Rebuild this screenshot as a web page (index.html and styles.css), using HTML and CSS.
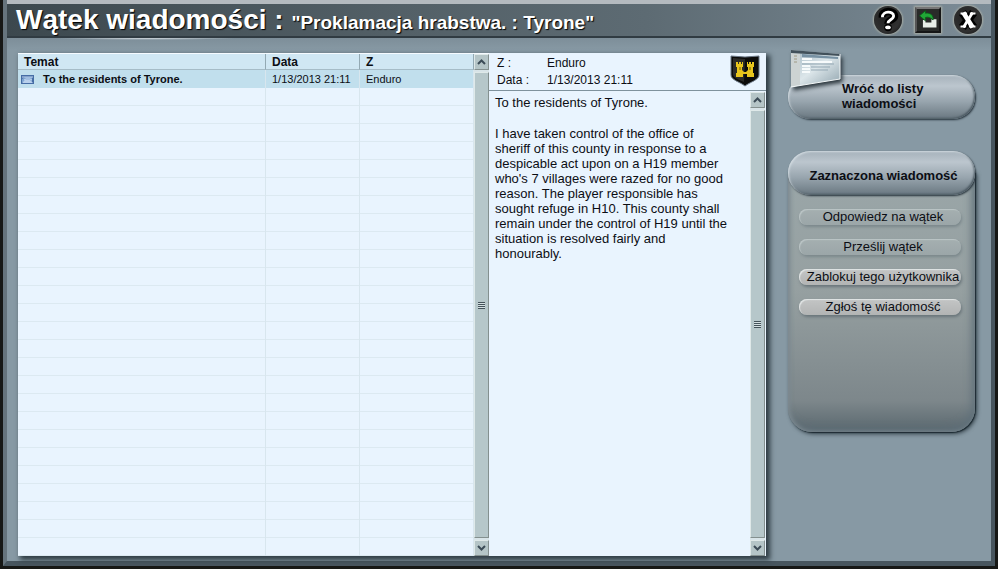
FILE: index.html
```
<!DOCTYPE html>
<html lang="pl">
    <head>
        <meta charset="UTF-8">
        <meta name="viewport" content="width=device-width,initial-scale=1.0">
        <title>Wątek wiadomości</title>
        <link rel="stylesheet" href="styles.css">
    </head>
    <body>
        <main class="window">
            <header class="titlebar">
                <h1>Wątek wiadomości : <span class="thread">"Proklamacja hrabstwa. : Tyrone"</span></h1>
                <div class="tools">
                    <button class="tool" aria-label="Pomoc">
                        <svg viewBox="0 0 30 30">
                            <path d="M9 12C8 4 22 4 22 11C22 15 15 14.500 15 19" fill="none" stroke="#000" stroke-width="8"/>
                            <circle cx="15" cy="23" r="4" fill="#000"/>
                            <path d="M9 12C9 5 21 5 21 10.500C21 15 15 14.500 15 18.500" fill="none" stroke="#fff" stroke-width="3"/>
                            <ellipse cx="15" cy="23" rx="3" ry="2" fill="#fff"/>
                        </svg>
                    </button>
                    <button class="tool square" aria-label="Minimalizuj">
                        <svg viewBox="0 0 26 26">
                            <path d="M7 13H10V16H17V12H23V22H7Z" fill="#e8eee8"/>
                            <path d="M3 8L10 2V5C16 4 20 8 19 13C16 10 13 9 10 10V14Z" fill="#21a637" stroke="#0b5c19" stroke-width="1"/>
                        </svg>
                    </button>
                    <button class="tool" aria-label="Zamknij">
                        <svg viewBox="0 0 30 30">
                            <path d="M9 7L21 23M21 7L9 23" stroke="#000" stroke-width="9"/>
                            <path d="M10 7L20 23" stroke="#fff" stroke-width="5"/>
                            <path d="M20 7L10 23" stroke="#fff" stroke-width="3"/>
                            <path d="M7 8H14M17 8H23M7 22H13M16 22H23" stroke="#fff" stroke-width="2"/>
                        </svg>
                    </button>
                </div>
            </header>
            <div class="content">
                <div class="panes">
                    <section class="list">
                        <table>
                            <thead>
                                <tr>
                                    <th class="subject">Temat</th>
                                    <th class="date">Data</th>
                                    <th class="from">Z</th>
                                </tr>
                            </thead>
                            <tbody>
                                <tr class="selected">
                                    <td class="mail">
                                        <svg class="envelope" viewBox="0 0 13 9">
                                            <rect width="13" height="9" fill="#466da5"/>
                                            <path d="M1 7V4L4 2H11V7Z" fill="#7fa5d2"/>
                                            <path d="M1 8L4 5H9L12 8Z" fill="#b9d0ec"/>
                                            <path d="M1 2H12M3 5L5 4H9L11 5" fill="none" stroke="#c3d8f0"/>
                                        </svg>To the residents of Tyrone.
                                    </td>
                                    <td>1/13/2013 21:11</td>
                                    <td>Enduro</td>
                                </tr>
                                <tr class="empty">
                                    <td></td>
                                    <td></td>
                                    <td></td>
                                </tr>
                            </tbody>
                        </table>
                        <div class="scroll">
                            <button class="arrow" aria-label="W górę"><svg viewBox="0 0 9 6"><path d="M1 5L4.500 1.500L8 5"/></svg></button>
                            <div class="thumb"><span class="grip"></span></div>
                            <button class="arrow" aria-label="W dół"><svg viewBox="0 0 9 6"><path d="M1 1L4.500 4.500L8 1"/></svg></button>
                        </div>
                    </section>
                    <section class="message">
                        <div class="info">
                            <dl>
                                <dt>Z :</dt>
                                <dd>Enduro</dd>
                                <dt>Data :</dt>
                                <dd>1/13/2013 21:11</dd>
                            </dl>
                            <svg class="shield" viewBox="0 0 30 32">
                                <path d="M1 1L15 2L29 1V20C29 25 20 27 15 31C10 27 1 25 1 20Z" fill="#0c0c0a" stroke="#6b7886" stroke-width="1"/>
                                <path d="M3 3L15 4L14 27C10 25 3 23 3 19Z" fill="#2b2b28"/>
                                <path d="M6 7H8V9H9V7H11V9H12V7H13V12H12V15L14 17H16L18 15V12H17V7H18V9H19V7H21V9H22V7H24V12H23V18H24V22H17V19H13V22H6V18H7V12H6Z" fill="#e8c51c"/>
                                <path d="M10 12V15M20 12V15" stroke="#6b5a08"/>
                            </svg>
                        </div>
                        <div class="reader">
                            <div class="text">
                                <p>To the residents of Tyrone.</p>
                                <p>I have taken control of the office of sheriff of this county in response to a despicable act upon on a H19 member who's 7 villages were razed for no good reason. The player responsible has sought refuge in H10. This county shall remain under the control of H19 until the situation is resolved fairly and honourably.</p>
                            </div>
                            <div class="scroll">
                                <button class="arrow" aria-label="W górę"><svg viewBox="0 0 9 6"><path d="M1 5L4.500 1.500L8 5"/></svg></button>
                                <div class="thumb"><span class="grip"></span></div>
                                <button class="arrow" aria-label="W dół"><svg viewBox="0 0 9 6"><path d="M1 1L4.500 4.500L8 1"/></svg></button>
                            </div>
                        </div>
                    </section>
                </div>
                <aside class="side">
                    <button class="pill back">
                        <svg class="preview" viewBox="0 0 52 40">
                            <defs>
                                <linearGradient id="sheet" x1="0" y1="0" x2="1" y2="1">
                                    <stop offset="0" stop-color="#9fb4c0"/>
                                    <stop offset="0.500" stop-color="#dce6ea"/>
                                    <stop offset="1" stop-color="#8fa3ad"/>
                                </linearGradient>
                            </defs>
                            <path d="M1 0L50 4V29L1 37Z" fill="url(#sheet)"/>
                            <path d="M1 0L10 1V35L1 37Z" fill="#cdd3d3"/>
                            <path d="M1 0L50 4V6L1 3Z" fill="#41505a"/>
                            <path d="M12 4L48 7V9L12 7Z" fill="#7791a3"/>
                            <path d="M12 9H22M12 12H42M12 16H20M12 19H20M12 22H20" stroke="#f6fafb" stroke-width="2"/>
                            <path d="M12 14H44M21 17H40M21 20H38" stroke="#93a7b3"/>
                            <path d="M4 6H7M4 9H7M4 12H7" stroke="#a09a85"/>
                            <path d="M50 4V29L1 37" fill="none" stroke="#f4f8f9"/>
                        </svg>
                        Wróć do listy wiadomości
                    </button>
                    <section class="group">
                        <h2 class="pill">Zaznaczona wiadomość</h2>
                        <div class="actions">
                            <button class="action dim">Odpowiedz na wątek</button>
                            <button class="action dim">Prześlij wątek</button>
                            <button class="action">Zablokuj tego użytkownika</button>
                            <button class="action">Zgłoś tę wiadomość</button>
                        </div>
                    </section>
                </aside>
            </div>
        </main>
    </body>
</html>
```
FILE: styles.css
```
*{
    margin: 0;
    padding: 0;
    box-sizing: border-box;
}
body{
    height: 100vh;
    padding: 0 3px 3px;
    background-color: #171816;
    font-family: "Liberation Sans", Arial, sans-serif;
    font-size: 13px;
    line-height: 15px;
    color: #0c0e14;
}
button{
    border: none;
    font: inherit;
    color: inherit;
    cursor: pointer;
}
svg{
    display: block;
}
.window{
    height: 100%;
    display: flex;
    flex-direction: column;
    border: solid #48565f;
    border-width: 0 4px 5px;
    border-left-color: #66747d;
    background-color: #8799a4;
}
.titlebar{
    height: 38px;
    display: flex;
    align-items: center;
    justify-content: space-between;
    padding: 0 9px;
    border-top: 4px solid #b4babf;
    border-bottom: 2px solid #303b42;
    background: linear-gradient(90deg, #3c484e, #536067 40%, #5d6b73 65%, #7c8c97);
}
h1{
    padding-top: 2px;
    font-size: 28px;
    line-height: 32px;
    color: #fff;
    text-shadow: 1px 1px 1px #000;
    white-space: nowrap;
}
.thread{
    font-size: 19px;
}
.tools{
    display: flex;
    align-items: center;
    gap: 13px;
}
.tool{
    width: 28px;
    height: 28px;
    border-radius: 50%;
    background: radial-gradient(circle at 40% 40%, #222, #303030 60%, #111);
    box-shadow: 0 0 2px 1px #a9aea5;
}
.square{
    width: 26px;
    height: 26px;
    border: 2px solid #161616;
    border-top-color: #777;
    border-left-color: #555;
    border-radius: 0;
    background: #292b29;
}
.content{
    flex: 1;
    min-height: 0;
    display: flex;
    gap: 22px;
    padding: 15px 16px 5px 11px;
    background: radial-gradient(ellipse 90px 2px at 140px 0, #d5dde2, transparent), linear-gradient(#7d8e99, #8799a4 12px);
}
.panes{
    flex: 1;
    display: flex;
    min-width: 0;
    background-color: #e9f4fe;
    box-shadow: 3px 3px 5px 1px #2f3d44;
}
.list{
    flex: 471;
    display: flex;
    min-width: 0;
    border-top: 1px solid #f6fbff;
}
table{
    flex: 1;
    height: 100%;
    table-layout: fixed;
    border-collapse: separate;
    border-spacing: 0;
    font-size: 11px;
}
.date{
    width: 94px;
}
.from{
    width: 25%;
}
th{
    height: 16px;
    padding: 1px 6px 0;
    border-right: 1px solid #93a9b3;
    border-bottom: 1px solid #a6bcc7;
    background-color: #d0e7f3;
    font-size: 12px;
    line-height: 14px;
    text-align: left;
}
td{
    padding: 0 6px;
    border-right: 1px solid #d8e6ee;
    line-height: 18px;
    white-space: nowrap;
}
.selected td{
    height: 18px;
    background-color: #c1dfed;
}
.selected .mail{
    display: flex;
    align-items: center;
    gap: 9px;
    padding-left: 3px;
    font-weight: bold;
}
.envelope{
    width: 13px;
    height: 9px;
}
.empty td{
    height: 100%;
    background: repeating-linear-gradient(transparent 0 17px, #dce9f1 17px 18px);
}
.scroll{
    width: 15px;
    flex: none;
    display: flex;
    flex-direction: column;
    gap: 2px;
    background-color: #d8e4e8;
}
.arrow{
    height: 16px;
    display: flex;
    align-items: center;
    justify-content: center;
    border: 1px solid #dfe9e9;
    border-right-color: #84908f;
    border-bottom-color: #84908f;
    background-color: #b5c5c7;
}
.arrow svg{
    width: 9px;
    height: 6px;
    fill: none;
    stroke: #3c4c57;
    stroke-width: 2;
}
.thumb{
    flex: 1;
    display: flex;
    align-items: center;
    justify-content: center;
    border: 1px solid #dfe9e9;
    border-right-color: #84908f;
    border-bottom-color: #84908f;
    background-color: #b6c7ca;
}
.grip{
    width: 7px;
    height: 7px;
    background: repeating-linear-gradient(#44535a 0 1px, #d5e0e2 1px 2px);
}
.message{
    flex: 277;
    display: flex;
    flex-direction: column;
    min-width: 0;
}
.info{
    display: flex;
    justify-content: space-between;
    height: 38px;
    padding: 2px 6px 0 8px;
    border-bottom: 1px solid #7f929d;
}
dl{
    display: grid;
    grid-template-columns: 50px auto;
    align-content: start;
    font-size: 12px;
    line-height: 17px;
}
.shield{
    width: 30px;
    height: 32px;
}
.reader{
    flex: 1;
    display: flex;
    justify-content: space-between;
    min-height: 0;
    padding: 1px 1px 0 6px;
}
.text{
    max-width: 234px;
    padding-top: 3px;
}
.text p{
    margin-bottom: 16px;
}
.side{
    width: 187px;
    flex: none;
    padding-top: 22px;
}
.pill{
    position: relative;
    z-index: 1;
    width: 100%;
    height: 44px;
    border-radius: 22px;
    background: linear-gradient(#a5b1ba, #bcc6ce 25%, #98a5ae 60%, #697780);
    box-shadow: inset 1px 1px 2px #d3dce2, inset -1px -1px 2px #46545d, 1px 1px 2px #25313a;
    font-size: 13px;
    font-weight: bold;
    line-height: 15px;
}
.back{
    padding: 0 40px 3px 54px;
    text-align: left;
}
.preview{
    position: absolute;
    left: 2px;
    top: -25px;
    width: 52px;
    height: 40px;
    filter: drop-shadow(2px 3px 2px #2b363d);
}
.group{
    margin-top: 32px;
}
.group .pill{
    display: flex;
    align-items: center;
    justify-content: center;
    padding: 5px 0 0 4px;
}
.actions{
    display: flex;
    flex-direction: column;
    gap: 14px;
    min-height: 260px;
    margin-top: -23px;
    padding: 37px 14px 30px 11px;
    border-radius: 0 0 24px 24px;
    background: linear-gradient(#9aa6a8, #96a0a1 45%, #7d878b 88%, #59676e);
    box-shadow: inset 2px 0 4px #7e8b92, inset -3px -3px 8px #60707a, 1px 1px 1px #1d2b33, 2px 2px 4px #34424a;
}
.action{
    height: 16px;
    padding-left: 6px;
    border-radius: 8px;
    background: linear-gradient(#c3c5c5, #b2b4b4);
    box-shadow: inset 1px 1px 1px #e2e6e6, 1px 2px 3px #69757a;
    line-height: 16px;
    white-space: nowrap;
}
.dim{
    background: linear-gradient(#a5afb0, #9ba6a8);
    box-shadow: inset 1px 1px 1px #bcc6c7, 1px 2px 3px #7b888c;
}
```
